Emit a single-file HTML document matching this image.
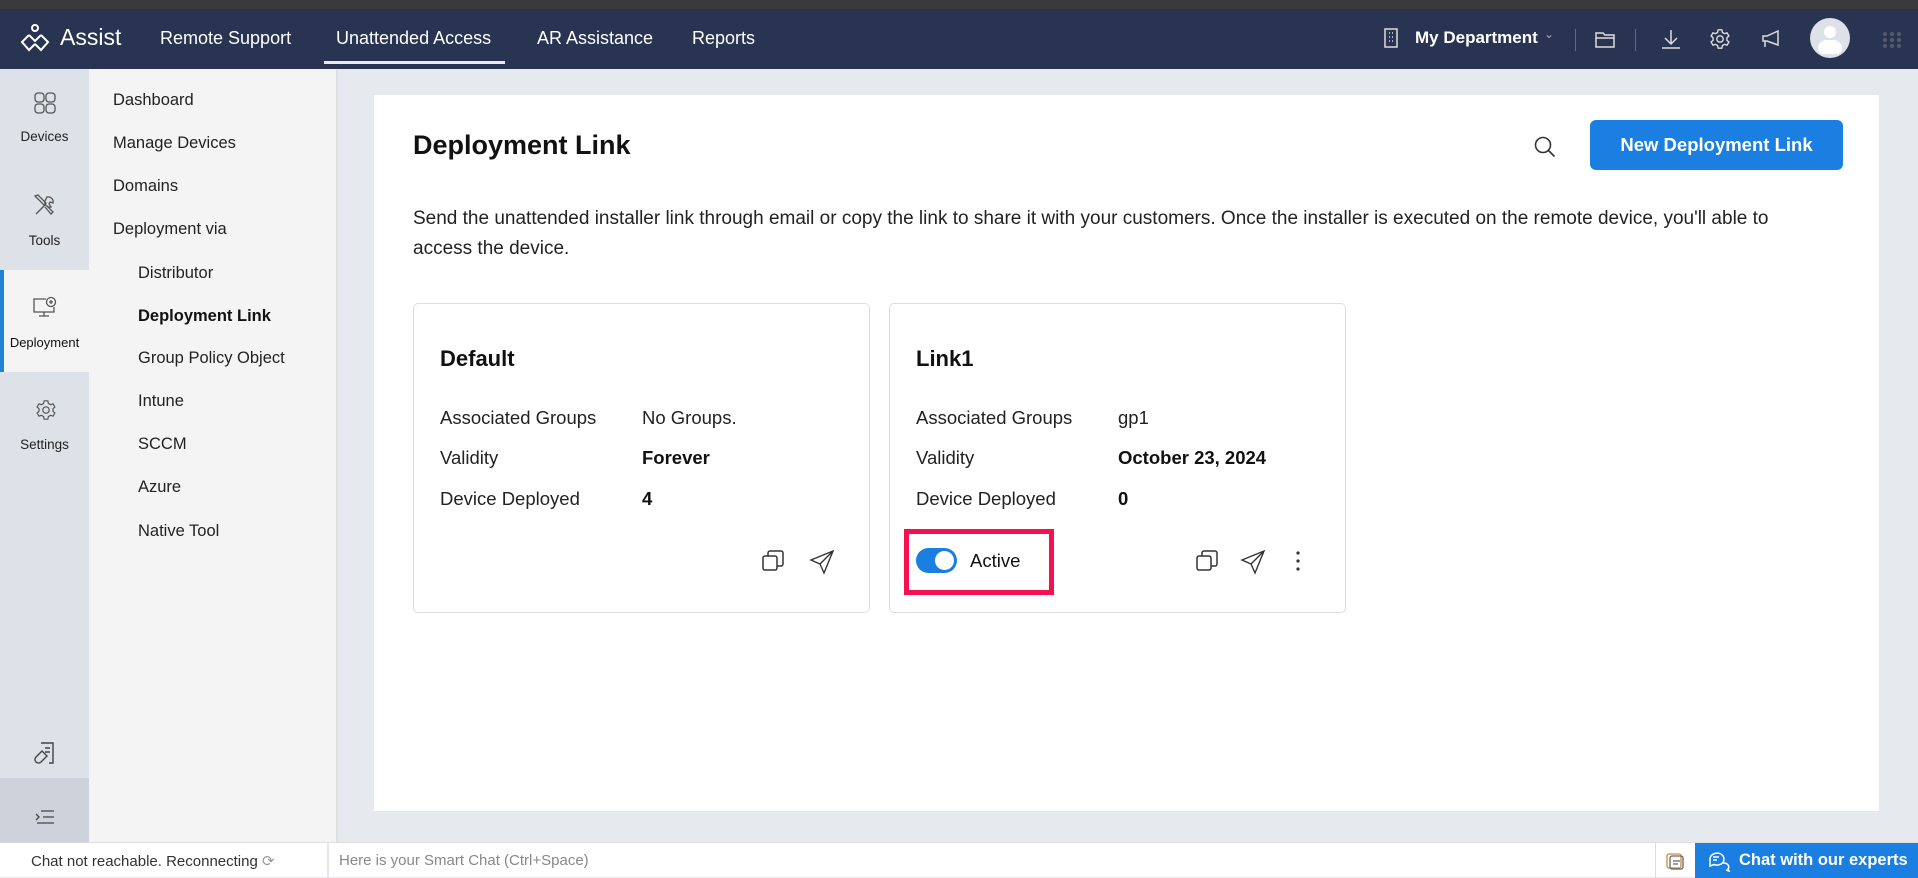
<!DOCTYPE html>
<html><head><meta charset="utf-8"><style>
*{box-sizing:border-box;margin:0;padding:0}
body{width:1918px;height:877px;overflow:hidden;font-family:"Liberation Sans",sans-serif;background:#e6e9ee;position:relative;color:#111}
.a{position:absolute}
.top{left:0;top:0;width:1918px;height:9px;background:#3a3a3a}
.hdr{left:0;top:9px;width:1918px;height:60px;background:#283452;color:#fff}
.nav{font-size:18px;top:19px;color:#fff}
.rail{left:0;top:69px;width:89px;height:773px;background:#dde1e8}
.sub{left:89px;top:69px;width:249px;height:773px;background:#f4f4f4;border-right:2px solid #e0e0e0}
.sm{font-size:16.5px;color:#222}
.rl{font-size:13.5px;color:#222;width:89px;text-align:center;left:0}
.panel{left:374px;top:95px;width:1505px;height:716px;background:#fff}
.card{background:#fff;border:1px solid #dedede;border-radius:5px}
.lab{font-size:18.5px;color:#222}
.val{font-size:18.5px;font-weight:bold;color:#111}
.bot{left:0;top:842px;width:1918px;height:35px;background:#fff;border-top:1px solid #ddd}
</style></head><body>
<div class="a top"></div>
<div class="a hdr">
 <svg class="a" style="left:19px;top:14px" width="32" height="32" viewBox="0 0 32 32" fill="none" stroke="#fff" stroke-width="2"><circle cx="16" cy="5" r="3"/><path d="M10 12 L3 19 L10 27 L16 21 M22 12 L29 19 L22 27 L16 21 M10 12 L16 18 L22 12"/></svg>
 <div class="a" style="left:60px;top:15px;font-size:23px">Assist</div>
 <div class="a nav" style="left:160px">Remote Support</div>
 <div class="a nav" style="left:336px">Unattended Access</div>
 <div class="a" style="left:324px;top:52px;width:181px;height:3px;background:#e8ecf2"></div>
 <div class="a nav" style="left:537px">AR Assistance</div>
 <div class="a nav" style="left:692px">Reports</div>
 <svg class="a" style="left:1383px;top:18px" width="16" height="22" viewBox="0 0 16 22" fill="none" stroke="#ddd" stroke-width="1.5"><rect x="2" y="2" width="12" height="18"/><path d="M6 6h1M9 6h1M6 10h1M9 10h1M6 14h1M9 14h1"/></svg>
 <div class="a" style="left:1415px;top:19px;font-size:17px;font-weight:bold">My Department</div>
 <div class="a" style="left:1544px;top:18px;font-size:12px;color:#aab">&#8964;</div>
 <div class="a" style="left:1575px;top:20px;width:1px;height:22px;background:#667"></div>
 <svg class="a" style="left:1594px;top:22px" width="22" height="18" viewBox="0 0 22 18" fill="none" stroke="#ddd" stroke-width="1.5"><path d="M2 2h7l2 2h9v12H2z M2 7h18"/></svg>
 <div class="a" style="left:1635px;top:20px;width:1px;height:22px;background:#667"></div>
 <svg class="a" style="left:1660px;top:19px" width="22" height="22" viewBox="0 0 22 22" fill="none" stroke="#ddd" stroke-width="1.5"><path d="M11 2v13M5 10l6 6 6-6M2 20h18"/></svg>
 <svg class="a" style="left:1709px;top:19px" width="22" height="22" viewBox="0 0 24 24" fill="none" stroke="#ddd" stroke-width="1.5"><circle cx="12" cy="12" r="3.5"/><path d="M10 2h4l.6 2.8 2.4 1.4 2.7-.9 2 3.4-2.1 1.9v2.8l2.1 1.9-2 3.4-2.7-.9-2.4 1.4L14 22h-4l-.6-2.8-2.4-1.4-2.7.9-2-3.4 2.1-1.9v-2.8L2.3 8.7l2-3.4 2.7.9 2.4-1.4z"/></svg>
 <svg class="a" style="left:1760px;top:19px" width="22" height="22" viewBox="0 0 22 22" fill="none" stroke="#ddd" stroke-width="1.5"><path d="M3 8h4l11-5v14L7 13H3z M5 13v6"/></svg>
 <div class="a" style="left:1810px;top:9px;width:40px;height:40px;border-radius:50%;background:#dde1e8;overflow:hidden"><div class="a" style="left:14px;top:8px;width:12px;height:12px;border-radius:50%;background:#fff"></div><div class="a" style="left:8px;top:22px;width:24px;height:14px;border-radius:12px 12px 8px 8px;background:#fff"></div></div>
 <svg class="a" style="left:1882px;top:22px" width="20" height="18" viewBox="0 0 20 18" fill="#555a68"><circle cx="3" cy="3" r="2"/><circle cx="10" cy="3" r="2"/><circle cx="17" cy="3" r="2"/><circle cx="3" cy="9" r="2"/><circle cx="10" cy="9" r="2"/><circle cx="17" cy="9" r="2"/><circle cx="3" cy="15" r="2"/><circle cx="10" cy="15" r="2"/><circle cx="17" cy="15" r="2"/></svg>
</div>
<div class="a rail">
 <svg class="a" style="left:34px;top:23px" width="22" height="22" viewBox="0 0 22 22" fill="none" stroke="#555" stroke-width="1.3"><rect x="1" y="1" width="9" height="9" rx="3"/><rect x="12" y="1" width="9" height="9" rx="3"/><rect x="1" y="12" width="9" height="9" rx="3"/><rect x="12" y="12" width="9" height="9" rx="3"/></svg>
 <div class="a rl" style="top:60px">Devices</div>
 <svg class="a" style="left:33px;top:124px" width="24" height="24" viewBox="0 0 24 24" fill="none" stroke="#555" stroke-width="1.3"><path d="M3 21l10-10M2 3l3-1 8 8-2 2-8-8zM14 4a5 5 0 0 1 6 6l-3-1-1 2 2 3a5 5 0 0 1-6-6z M12 14l6 7 2-2-6-6"/></svg>
 <div class="a rl" style="top:164px">Tools</div>
 <div class="a" style="left:0;top:201px;width:89px;height:102px;background:#f4f4f4;border-left:4px solid #1f86d6"></div>
 <svg class="a" style="left:32px;top:227px" width="26" height="24" viewBox="0 0 26 24" fill="none" stroke="#555" stroke-width="1.3"><path d="M14 3H2v13h20v-5M12 16v4M7 20h10"/><circle cx="19" cy="6" r="4.5"/><path d="M19 4v4M17 6h4"/></svg>
 <div class="a rl" style="top:266px;color:#111;font-size:13px">Deployment</div>
 <svg class="a" style="left:35px;top:330px" width="22" height="22" viewBox="0 0 24 24" fill="none" stroke="#555" stroke-width="1.3"><circle cx="12" cy="12" r="3.5"/><path d="M10 2h4l.6 2.8 2.4 1.4 2.7-.9 2 3.4-2.1 1.9v2.8l2.1 1.9-2 3.4-2.7-.9-2.4 1.4L14 22h-4l-.6-2.8-2.4-1.4-2.7.9-2-3.4 2.1-1.9v-2.8L2.3 8.7l2-3.4 2.7.9 2.4-1.4z"/></svg>
 <div class="a rl" style="top:368px">Settings</div>
 <svg class="a" style="left:33px;top:672px" width="24" height="26" viewBox="0 0 24 26" fill="none" stroke="#444" stroke-width="1.4"><path d="M8 2h12v20h-4M12 7h5M12 11h5M3 16l6-6 5 5-6 6a3 3 0 0 1-5-5z"/></svg>
 <div class="a" style="left:0;top:709px;width:89px;height:64px;background:#cdd2db"></div>
 <svg class="a" style="left:35px;top:740px" width="20" height="16" viewBox="0 0 20 16" fill="none" stroke="#444" stroke-width="1.3"><path d="M6 2h13M8 8h11M2 14h17M1 5l3 3-3 3"/></svg>
</div>
<div class="a sub">
 <div class="a sm" style="left:24px;top:22px">Dashboard</div>
 <div class="a sm" style="left:24px;top:65px">Manage Devices</div>
 <div class="a sm" style="left:24px;top:108px">Domains</div>
 <div class="a sm" style="left:24px;top:151px">Deployment via</div>
 <div class="a sm" style="left:49px;top:195px">Distributor</div>
 <div class="a sm" style="left:49px;top:238px;font-weight:bold;color:#111">Deployment Link</div>
 <div class="a sm" style="left:49px;top:280px">Group Policy Object</div>
 <div class="a sm" style="left:49px;top:323px">Intune</div>
 <div class="a sm" style="left:49px;top:366px">SCCM</div>
 <div class="a sm" style="left:49px;top:409px">Azure</div>
 <div class="a sm" style="left:49px;top:453px">Native Tool</div>
</div>
<div class="a panel">
 <div class="a" style="left:39px;top:35px;font-size:27px;font-weight:bold">Deployment Link</div>
 <svg class="a" style="left:1159px;top:40px" width="24" height="24" viewBox="0 0 24 24" fill="none" stroke="#333" stroke-width="1.6"><circle cx="10" cy="10" r="7.5"/><path d="M15.5 15.5l6 6"/></svg>
 <div class="a" style="left:1216px;top:25px;width:253px;height:50px;background:#1a7fe0;border-radius:6px;color:#fff;font-size:18.5px;font-weight:bold;text-align:center;line-height:50px">New Deployment Link</div>
 <div class="a" style="left:39px;top:109px;width:1390px;font-size:19px;line-height:30px;color:#222">Send the unattended installer link through email or copy the link to share it with your customers. Once the installer is executed on the remote device, you'll able to access the device.</div>
</div>
<div class="a card" style="left:413px;top:303px;width:457px;height:310px">
 <div class="a" style="left:26px;top:42px;font-size:22px;font-weight:bold">Default</div>
 <div class="a lab" style="left:26px;top:103px">Associated Groups</div><div class="a lab" style="left:228px;top:103px">No Groups.</div>
 <div class="a lab" style="left:26px;top:143px">Validity</div><div class="a val" style="left:228px;top:143px">Forever</div>
 <div class="a lab" style="left:26px;top:184px">Device Deployed</div><div class="a val" style="left:228px;top:184px">4</div>
 <svg class="a" style="left:347px;top:245px" width="24" height="24" viewBox="0 0 24 24" fill="none" stroke="#333" stroke-width="1.5"><rect x="2" y="7" width="14" height="14" rx="2"/><path d="M7 7V4a2 2 0 0 1 2-2h11a2 2 0 0 1 2 2v11a2 2 0 0 1-2 2h-4"/></svg>
 <svg class="a" style="left:395px;top:245px" width="26" height="26" viewBox="0 0 26 26" fill="none" stroke="#333" stroke-width="1.4"><path d="M24 2L2 11l9 4 4 9z M24 2L11 15"/></svg>
</div>
<div class="a card" style="left:889px;top:303px;width:457px;height:310px">
 <div class="a" style="left:26px;top:42px;font-size:22px;font-weight:bold">Link1</div>
 <div class="a lab" style="left:26px;top:103px">Associated Groups</div><div class="a lab" style="left:228px;top:103px">gp1</div>
 <div class="a lab" style="left:26px;top:143px">Validity</div><div class="a val" style="left:228px;top:143px">October 23, 2024</div>
 <div class="a lab" style="left:26px;top:184px">Device Deployed</div><div class="a val" style="left:228px;top:184px">0</div>
 <div class="a" style="left:14px;top:225px;width:150px;height:66px;border:5px solid #f5104f"></div>
 <div class="a" style="left:26px;top:244px;width:41px;height:25px;border-radius:13px;background:#1a7fe0"><div class="a" style="left:19px;top:3px;width:19px;height:19px;border-radius:50%;background:#fff"></div></div>
 <div class="a" style="left:80px;top:246px;font-size:18.5px">Active</div>
 <svg class="a" style="left:305px;top:245px" width="24" height="24" viewBox="0 0 24 24" fill="none" stroke="#333" stroke-width="1.5"><rect x="2" y="7" width="14" height="14" rx="2"/><path d="M7 7V4a2 2 0 0 1 2-2h11a2 2 0 0 1 2 2v11a2 2 0 0 1-2 2h-4"/></svg>
 <svg class="a" style="left:350px;top:245px" width="26" height="26" viewBox="0 0 26 26" fill="none" stroke="#333" stroke-width="1.4"><path d="M24 2L2 11l9 4 4 9z M24 2L11 15"/></svg>
 <svg class="a" style="left:405px;top:246px" width="6" height="22" viewBox="0 0 6 22" fill="#333"><circle cx="3" cy="3" r="1.6"/><circle cx="3" cy="11" r="1.6"/><circle cx="3" cy="19" r="1.6"/></svg>
</div>
<div class="a bot">
 <div class="a" style="left:31px;top:9px;font-size:15px;color:#333">Chat not reachable. Reconnecting <span style="color:#999">&#10227;</span></div>
 <div class="a" style="left:327px;top:0;width:2px;height:35px;background:#e6e6e6"></div>
 <div class="a" style="left:339px;top:9px;font-size:15px;color:#888">Here is your Smart Chat (Ctrl+Space)</div>
 <div class="a" style="left:1655px;top:0;width:1px;height:35px;background:#ddd"></div>
 <svg class="a" style="left:1665px;top:8px" width="20" height="20" viewBox="0 0 20 20" fill="none" stroke="#666" stroke-width="1.3"><rect x="2" y="3" width="14" height="14" rx="2" stroke="#c98a3a"/><rect x="5" y="5" width="13" height="13" rx="2"/><path d="M8 10h7M8 13h5"/></svg>
 <div class="a" style="left:1695px;top:0;width:223px;height:35px;background:#1a7fe0;color:#fff;font-size:16.5px;font-weight:bold;line-height:35px;padding-left:44px;white-space:nowrap;overflow:hidden">Chat with our experts</div>
 <svg class="a" style="left:1707px;top:7px" width="24" height="22" viewBox="0 0 24 22" fill="none" stroke="#fff" stroke-width="1.5"><path d="M3 9a7 6 0 1 1 4 5.5L3 16z M6 7h6M6 10h4 M16 13a5 4 0 0 1 5 6l1 2-3-1"/></svg>
</div>
</body></html>
